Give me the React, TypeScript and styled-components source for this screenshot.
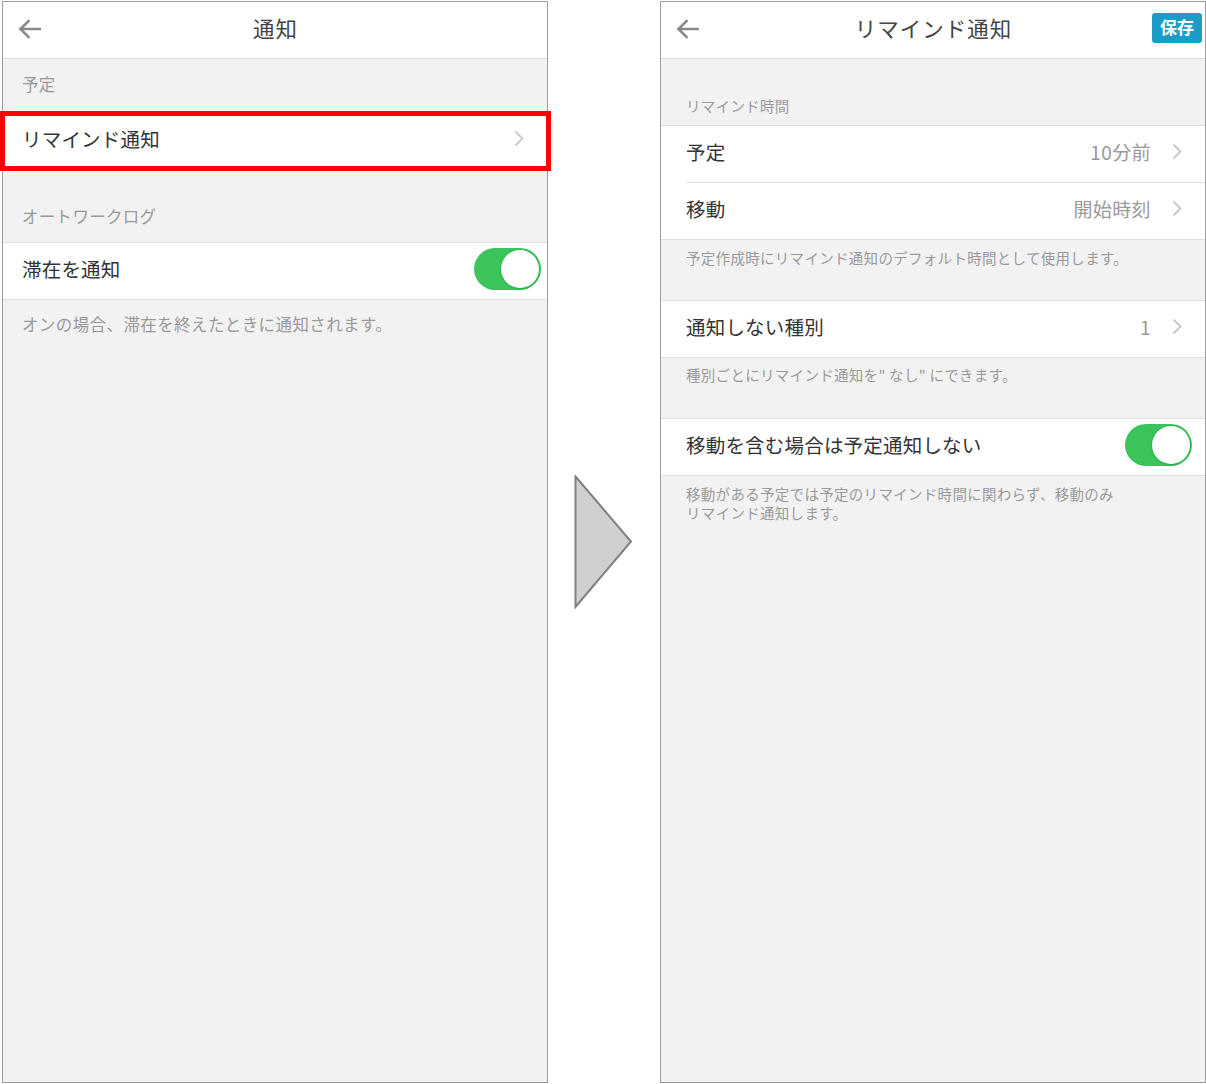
import React from "react";
import styled, { createGlobalStyle } from "styled-components";

const Global = createGlobalStyle`
  html, body { margin: 0; padding: 0; background: #fff; }
  body { font-family: "Noto Sans CJK JP", "Noto Sans", sans-serif; }
`;

const Page = styled.div`
  display: flex;
  padding: 1px 0 0 2px;
  width: 1206px;
  box-sizing: border-box;
`;

const Phone = styled.div<{ $pad: number; $small: number }>`
  --pad: ${(p) => p.$pad}px;
  --small: ${(p) => p.$small}px;
  position: relative;
  width: 546px;
  height: 1082px;
  box-sizing: border-box;
  border: 1px solid #9c9c9c;
  background: #f2f2f2;
  display: flex;
  flex-direction: column;
`;

const Header = styled.header`
  height: 56px;
  flex: none;
  background: #fff;
  border-bottom: 1px solid #dcdcdc;
  display: grid;
  grid-template-columns: 1fr auto 1fr;
  align-items: center;
  padding: 0 13px 0 14px;
`;

const Title = styled.div`
  font-size: 21.5px;
  color: #444;
  letter-spacing: 1px;
  margin-top: -5px;
`;

const Back = styled.svg`
  display: block;
  margin-top: -2px;
`;

const SaveButton = styled.button`
  justify-self: end;
  width: 50px;
  height: 30px;
  border: none;
  border-radius: 3px;
  background: #1c9dc8;
  color: #fff;
  font-family: inherit;
  font-weight: 700;
  font-size: 17px;
  padding: 0 0 2px;
  margin: -5px -10px 0 0;
  line-height: 28px;
`;

const SectionLabel = styled.div<{ $height: number; $bottom: number }>`
  height: ${(p) => p.$height}px;
  box-sizing: border-box;
  display: flex;
  align-items: flex-end;
  padding: 0 var(--pad) ${(p) => p.$bottom}px;
  font-size: var(--small);
  line-height: 22px;
  color: #9a9a9a;
  letter-spacing: 0.3px;
`;

const Group = styled.div`
  background: #fff;
  border-top: 1px solid #e0e0e0;
  border-bottom: 1px solid #e0e0e0;
`;

const Row = styled.div<{ $divider?: boolean; $rightPad?: number }>`
  position: relative;
  height: ${(p) => (p.$divider ? 57 : 56)}px;
  box-sizing: border-box;
  display: flex;
  align-items: center;
  margin-left: var(--pad);
  padding-right: ${(p) => p.$rightPad ?? 23}px;
  padding-bottom: 5px;
  border-bottom: ${(p) => (p.$divider ? "1px solid #e0e0e0" : "none")};
`;

const Label = styled.div`
  flex: 1;
  font-size: 19.5px;
  color: #333;
  letter-spacing: 0.2px;
`;

const Value = styled.div`
  font-size: 19px;
  color: #999;
  margin-right: 21px;
  letter-spacing: 0.4px;
`;

const Highlight = styled.div`
  position: absolute;
  left: -22px;
  right: -4px;
  top: -2px;
  bottom: -2px;
  border: 5px solid #ff0000;
  pointer-events: none;
  z-index: 2;
`;

const Toggle = styled.div`
  width: 67px;
  height: 42px;
  border-radius: 21px;
  background: #3bc45c;
  display: flex;
  align-items: center;
  justify-content: flex-end;
  padding: 2px;
  box-sizing: border-box;
`;

const Knob = styled.div`
  width: 38px;
  height: 38px;
  border-radius: 50%;
  background: #fff;
  box-shadow: 0 0 0 1px rgba(40, 160, 70, 0.35), 0 1px 2px rgba(0, 0, 0, 0.1);
`;

const Note = styled.div<{ $top: number; $height?: number }>`
  padding: ${(p) => p.$top}px var(--pad) 0;
  height: ${(p) => (p.$height ? `${p.$height}px` : "auto")};
  box-sizing: border-box;
  font-size: var(--small);
  line-height: ${(p) => (p.$height ? "20px" : "18.5px")};
  color: #9a9a9a;
  letter-spacing: 0.3px;
`;

const LeftNote = styled.div`
  padding: 13px var(--pad) 0;
  font-size: var(--small);
  line-height: 22px;
  color: #9a9a9a;
  letter-spacing: 0.4px;
`;

const Middle = styled.div`
  width: 112px;
  flex: none;
  display: flex;
  align-items: center;
  justify-content: center;
  height: 1082px;
`;

const BackArrow = () => (
  <Back width="24" height="20" viewBox="0 0 24 20">
    <path
      d="M23 10H3.5M11.5 2L3.5 10L11.5 18"
      fill="none"
      stroke="#8a8a8a"
      strokeWidth="2.6"
      strokeLinecap="square"
    />
  </Back>
);

const Chevron = () => (
  <svg width="10" height="17" viewBox="0 0 10 17">
    <polyline
      points="1.5,1.5 8.5,8.5 1.5,15.5"
      fill="none"
      stroke="#c6c6c6"
      strokeWidth="1.8"
    />
  </svg>
);

const Switch = () => (
  <Toggle>
    <Knob />
  </Toggle>
);

export default function App() {
  return (
    <>
      <Global />
      <Page>
        <Phone $pad={19} $small={16.5}>
          <Header>
            <BackArrow />
            <Title>通知</Title>
            <span />
          </Header>
          <SectionLabel $height={53} $bottom={17}>
            予定
          </SectionLabel>
          <Group>
            <Row>
              <Highlight />
              <Label>リマインド通知</Label>
              <Chevron />
            </Row>
          </Group>
          <SectionLabel $height={72} $bottom={15}>
            オートワークログ
          </SectionLabel>
          <Group>
            <Row $rightPad={6}>
              <Label>滞在を通知</Label>
              <Switch />
            </Row>
          </Group>
          <LeftNote>オンの場合、滞在を終えたときに通知されます。</LeftNote>
        </Phone>

        <Middle>
          <svg width="60" height="134" viewBox="0 0 60 134">
            <polygon
              points="1.5,1.5 57,66.5 1.5,132"
              fill="#d0d0d0"
              stroke="#808080"
              strokeWidth="2"
            />
          </svg>
        </Middle>

        <Phone $pad={25} $small={14.5}>
          <Header>
            <BackArrow />
            <Title>リマインド通知</Title>
            <SaveButton>保存</SaveButton>
          </Header>
          <SectionLabel $height={66} $bottom={8}>
            リマインド時間
          </SectionLabel>
          <Group>
            <Row $divider>
              <Label>予定</Label>
              <Value>10分前</Value>
              <Chevron />
            </Row>
            <Row>
              <Label>移動</Label>
              <Value>開始時刻</Value>
              <Chevron />
            </Row>
          </Group>
          <Note $top={8} $height={60}>
            予定作成時にリマインド通知のデフォルト時間として使用します。
          </Note>
          <Group>
            <Row>
              <Label>通知しない種別</Label>
              <Value>1</Value>
              <Chevron />
            </Row>
          </Group>
          <Note $top={7} $height={60}>
            種別ごとにリマインド通知を" なし" にできます。
          </Note>
          <Group>
            <Row $rightPad={13}>
              <Label>移動を含む場合は予定通知しない</Label>
              <Switch />
            </Row>
          </Group>
          <Note $top={9}>
            移動がある予定では予定のリマインド時間に関わらず、移動のみ
            <br />
            リマインド通知します。
          </Note>
        </Phone>
      </Page>
    </>
  );
}
